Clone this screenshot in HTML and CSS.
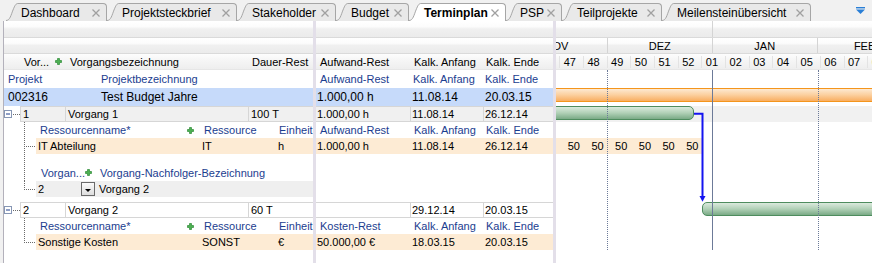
FILE: index.html
```html
<!DOCTYPE html>
<html lang="de">
<head>
<meta charset="utf-8">
<title>Terminplan</title>
<link rel="stylesheet" href="styles.css">
</head>
<body>
<div class="tabbar">
  <div class="tab tw-dashboard">
    <svg class="tab-edge" viewBox="0 0 12 18"><path class="edge-fill" d="M0 18 C4 18 5 12 7 7 C9 2 10 .5 12 .5 V18 Z"/><path class="edge-line" d="M0 17.5 C4 17.5 5 12 7 7 C9 2 10 .5 12 .5"/></svg>
    <div class="tab-body"><span class="tab-label">Dashboard</span><svg class="tab-close" viewBox="0 0 8 8"><path d="M.5 .5 L7.5 7.5 M7.5 .5 L.5 7.5"/></svg></div>
  </div>
  <div class="tab tw-steckbrief">
    <svg class="tab-edge" viewBox="0 0 12 18"><path class="edge-fill" d="M0 18 C4 18 5 12 7 7 C9 2 10 .5 12 .5 V18 Z"/><path class="edge-line" d="M0 17.5 C4 17.5 5 12 7 7 C9 2 10 .5 12 .5"/></svg>
    <div class="tab-body"><span class="tab-label">Projektsteckbrief</span><svg class="tab-close" viewBox="0 0 8 8"><path d="M.5 .5 L7.5 7.5 M7.5 .5 L.5 7.5"/></svg></div>
  </div>
  <div class="tab tw-stake">
    <svg class="tab-edge" viewBox="0 0 12 18"><path class="edge-fill" d="M0 18 C4 18 5 12 7 7 C9 2 10 .5 12 .5 V18 Z"/><path class="edge-line" d="M0 17.5 C4 17.5 5 12 7 7 C9 2 10 .5 12 .5"/></svg>
    <div class="tab-body"><span class="tab-label">Stakeholder</span><svg class="tab-close" viewBox="0 0 8 8"><path d="M.5 .5 L7.5 7.5 M7.5 .5 L.5 7.5"/></svg></div>
  </div>
  <div class="tab tw-budget">
    <svg class="tab-edge" viewBox="0 0 12 18"><path class="edge-fill" d="M0 18 C4 18 5 12 7 7 C9 2 10 .5 12 .5 V18 Z"/><path class="edge-line" d="M0 17.5 C4 17.5 5 12 7 7 C9 2 10 .5 12 .5"/></svg>
    <div class="tab-body"><span class="tab-label">Budget</span><svg class="tab-close" viewBox="0 0 8 8"><path d="M.5 .5 L7.5 7.5 M7.5 .5 L.5 7.5"/></svg></div>
  </div>
  <div class="tab tw-termin active">
    <svg class="tab-edge" viewBox="0 0 12 18"><path class="edge-fill" d="M0 18 C4 18 5 12 7 7 C9 2 10 .5 12 .5 V18 Z"/><path class="edge-line" d="M0 17.5 C4 17.5 5 12 7 7 C9 2 10 .5 12 .5"/></svg>
    <div class="tab-body"><span class="tab-label">Terminplan</span><svg class="tab-close" viewBox="0 0 8 8"><path d="M.5 .5 L7.5 7.5 M7.5 .5 L.5 7.5"/></svg></div>
  </div>
  <div class="tab tw-psp">
    <svg class="tab-edge" viewBox="0 0 12 18"><path class="edge-fill" d="M0 18 C4 18 5 12 7 7 C9 2 10 .5 12 .5 V18 Z"/><path class="edge-line" d="M0 17.5 C4 17.5 5 12 7 7 C9 2 10 .5 12 .5"/></svg>
    <div class="tab-body"><span class="tab-label">PSP</span><svg class="tab-close" viewBox="0 0 8 8"><path d="M.5 .5 L7.5 7.5 M7.5 .5 L.5 7.5"/></svg></div>
  </div>
  <div class="tab tw-teil">
    <svg class="tab-edge" viewBox="0 0 12 18"><path class="edge-fill" d="M0 18 C4 18 5 12 7 7 C9 2 10 .5 12 .5 V18 Z"/><path class="edge-line" d="M0 17.5 C4 17.5 5 12 7 7 C9 2 10 .5 12 .5"/></svg>
    <div class="tab-body"><span class="tab-label">Teilprojekte</span><svg class="tab-close" viewBox="0 0 8 8"><path d="M.5 .5 L7.5 7.5 M7.5 .5 L.5 7.5"/></svg></div>
  </div>
  <div class="tab tw-meilen">
    <svg class="tab-edge" viewBox="0 0 12 18"><path class="edge-fill" d="M0 18 C4 18 5 12 7 7 C9 2 10 .5 12 .5 V18 Z"/><path class="edge-line" d="M0 17.5 C4 17.5 5 12 7 7 C9 2 10 .5 12 .5"/></svg>
    <div class="tab-body"><span class="tab-label">Meilensteinübersicht</span><svg class="tab-close" viewBox="0 0 8 8"><path d="M.5 .5 L7.5 7.5 M7.5 .5 L.5 7.5"/></svg></div>
  </div>
  <svg class="tab-menu" viewBox="0 0 9 7"><rect x="0" y="0" width="9" height="1.4"/><path d="M0 2.6 H9 L4.5 7 Z"/></svg>
</div>

<div class="main">
  <!-- left task table -->
  <section class="panel p-left">
    <div class="band"></div>
    <div class="band band-m"></div>
    <div class="colhead">
      <div class="lc-tree"></div>
      <div class="lc-num hd">Vor...<svg class="plus" viewBox="0 0 7 7"><path d="M2.5 .5h2v2h2v2h-2v2h-2v-2h-2v-2h2z"/></svg></div>
      <div class="lc-name hd">Vorgangsbezeichnung</div>
      <div class="lc-dur hd">Dauer-Rest</div>
    </div>
    <div class="row row-proj-head">
      <div class="pc-nr lbl">Projekt</div>
      <div class="pc-name lbl">Projektbezeichnung</div>
    </div>
    <div class="row row-proj sel">
      <div class="pc-nr">002316</div>
      <div class="pc-name">Test Budget Jahre</div>
    </div>
    <div class="row row-task shade">
      <div class="lc-tree toggle"><svg class="minus" viewBox="0 0 8 8"><rect x=".5" y=".5" width="7" height="7"/><path d="M2 4 H6"/></svg></div>
      <div class="lc-num cell">1</div>
      <div class="lc-name cell">Vorgang 1</div>
      <div class="lc-dur cell">100 T</div>
    </div>
    <div class="row row-sub">
      <div class="sub-tree tl-v"></div>
      <div class="sc-name lbl">Ressourcenname*<svg class="plus" viewBox="0 0 7 7"><path d="M2.5 .5h2v2h2v2h-2v2h-2v-2h-2v-2h2z"/></svg></div>
      <div class="sc-res lbl">Ressource</div>
      <div class="sc-unit lbl">Einheit</div>
    </div>
    <div class="row row-sub">
      <div class="sub-tree tl-tee"></div>
      <div class="sub-data res">
        <div class="sc-name">IT Abteilung</div>
        <div class="sc-res">IT</div>
        <div class="sc-unit">h</div>
      </div>
    </div>
    <div class="row row-gap1"><div class="sub-tree tl-v"></div></div>
    <div class="row row-nhead">
      <div class="sub-tree tl-v"></div>
      <div class="nc-1 lbl">Vorgan...<svg class="plus" viewBox="0 0 7 7"><path d="M2.5 .5h2v2h2v2h-2v2h-2v-2h-2v-2h2z"/></svg></div>
      <div class="nc-2 lbl">Vorgang-Nachfolger-Bezeichnung</div>
    </div>
    <div class="row row-nrow">
      <div class="sub-tree tl-elbow"></div>
      <div class="sub-data succ">
        <div class="nc-1">2<svg class="dropbtn" viewBox="0 0 14 14"><defs><linearGradient id="btng" x1="0" y1="0" x2="0" y2="1"><stop offset="0" stop-color="#fbfbfb"/><stop offset="1" stop-color="#dcdcdc"/></linearGradient></defs><rect x=".5" y=".5" width="13" height="13" fill="url(#btng)" stroke="#6a6a6a"/><path d="M4 7 H10 L7 10 Z" fill="#000"/></svg></div>
        <div class="nc-2">Vorgang 2</div>
      </div>
    </div>
    <div class="row row-gap2"></div>
    <div class="row row-task">
      <div class="lc-tree toggle"><svg class="minus" viewBox="0 0 8 8"><rect x=".5" y=".5" width="7" height="7"/><path d="M2 4 H6"/></svg></div>
      <div class="lc-num cell">2</div>
      <div class="lc-name cell">Vorgang 2</div>
      <div class="lc-dur cell">60 T</div>
    </div>
    <div class="row row-sub">
      <div class="sub-tree tl-v"></div>
      <div class="sc-name lbl">Ressourcenname*<svg class="plus" viewBox="0 0 7 7"><path d="M2.5 .5h2v2h2v2h-2v2h-2v-2h-2v-2h2z"/></svg></div>
      <div class="sc-res lbl">Ressource</div>
      <div class="sc-unit lbl">Einheit</div>
    </div>
    <div class="row row-sub">
      <div class="sub-tree tl-elbow"></div>
      <div class="sub-data res">
        <div class="sc-name">Sonstige Kosten</div>
        <div class="sc-res">SONST</div>
        <div class="sc-unit">€</div>
      </div>
    </div>
  </section>

  <div class="sep"></div>

  <!-- middle values table -->
  <section class="panel p-mid">
    <div class="band"></div>
    <div class="band band-m"></div>
    <div class="colhead">
      <div class="mc1 hd">Aufwand-Rest</div>
      <div class="mc2 hd">Kalk. Anfang</div>
      <div class="mc3 hd">Kalk. Ende</div>
    </div>
    <div class="row row-proj-head">
      <div class="mc1 lbl">Aufwand-Rest</div>
      <div class="mc2 lbl lbl-s">Kalk. Anfang</div>
      <div class="mc3 lbl lbl-s">Kalk. Ende</div>
    </div>
    <div class="row row-proj sel">
      <div class="mc1 val">1.000,00 h</div>
      <div class="mc2 val">11.08.14</div>
      <div class="mc3 val">20.03.15</div>
    </div>
    <div class="row row-task shade">
      <div class="mc1 cell">1.000,00 h</div>
      <div class="mc2 cell">11.08.14</div>
      <div class="mc3 cell">26.12.14</div>
    </div>
    <div class="row row-sub">
      <div class="mc1 lbl">Aufwand-Rest</div>
      <div class="mc2 lbl">Kalk. Anfang</div>
      <div class="mc3 lbl">Kalk. Ende</div>
    </div>
    <div class="row row-sub res">
      <div class="mc1 val">1.000,00 h</div>
      <div class="mc2 val">11.08.14</div>
      <div class="mc3 val">26.12.14</div>
    </div>
    <div class="row row-gap1"></div>
    <div class="row row-nhead"></div>
    <div class="row row-nrow"></div>
    <div class="row row-gap2"></div>
    <div class="row row-task">
      <div class="mc1 cell"></div>
      <div class="mc2 cell">29.12.14</div>
      <div class="mc3 cell">20.03.15</div>
    </div>
    <div class="row row-sub">
      <div class="mc1 lbl">Kosten-Rest</div>
      <div class="mc2 lbl">Kalk. Anfang</div>
      <div class="mc3 lbl">Kalk. Ende</div>
    </div>
    <div class="row row-sub res">
      <div class="mc1 val">50.000,00 €</div>
      <div class="mc2 val">18.03.15</div>
      <div class="mc3 val">20.03.15</div>
    </div>
  </section>

  <div class="sep"></div>

  <!-- gantt -->
  <section class="panel p-gantt">
    <div class="band"><div class="yr-2014"></div></div>
    <div class="band band-m">
      <div class="months">
        <div class="mon m-nov">NOV</div>
        <div class="mon m-dez">DEZ</div>
        <div class="mon m-jan">JAN</div>
        <div class="mon m-feb">FEB</div>
      </div>
    </div>
    <div class="colhead">
      <div class="weeks">
        <span class="wk">46</span><span class="wk">47</span><span class="wk">48</span><span class="wk">49</span><span class="wk">50</span><span class="wk">51</span><span class="wk">52</span><span class="wk">01</span><span class="wk">02</span><span class="wk">03</span><span class="wk">04</span><span class="wk">05</span><span class="wk">06</span><span class="wk">07</span><span class="wk">08</span>
      </div>
    </div>
    <div class="row row-proj-head"></div>
    <div class="row row-proj"></div>
    <div class="row row-task g-shade"></div>
    <div class="row row-sub"></div>
    <div class="row row-sub">
      <div class="load"><span>50</span><span>50</span><span>50</span><span>50</span><span>50</span><span>50</span></div>
    </div>

    <div class="bar bar-proj"></div>
    <div class="bar bar-task1"></div>
    <div class="bar bar-task2"></div>
    <svg class="link" viewBox="0 0 16 95"><path d="M2 4.7 H10.5 V88" fill="none" stroke="#1414f0" stroke-width="2"/><path d="M7.5 87 H13.5 L10.5 92.7 Z" fill="#1414f0"/></svg>
    <div class="gl gl-dot gl-dec"></div>
    <div class="gl gl-solid gl-jan"></div>
    <div class="gl gl-dot gl-feb"></div>
  </section>
</div>
</body>
</html>
```

FILE: styles.css
```css
* { box-sizing: border-box; }
html, body { margin: 0; padding: 0; }
body {
  width: 872px;
  height: 263px;
  overflow: hidden;
  background: #f1f1f1;
  font-family: "Liberation Sans", Arial, sans-serif;
  font-size: 11px;
  color: #000;
}

/* ---------- tab strip ---------- */
.tabbar {
  display: flex;
  align-items: flex-end;
  height: 21px;
  padding-left: 6px;
}
.tab { display: flex; flex: none; height: 18px; }
.tab-edge { display: block; flex: none; width: 12px; height: 18px; }
.edge-fill { fill: #e9e9e9; }
.edge-line { fill: none; stroke: #a6a6a6; stroke-width: 1; }
.tab-body {
  flex: 1;
  display: flex;
  align-items: center;
  background: #e9e9e9;
  border-top: 1px solid #a6a6a6;
  border-right: 1px solid #a6a6a6;
  border-top-right-radius: 4px;
  padding: 0 6px 0 3px;
  font-size: 12px;
  white-space: nowrap;
}
.tab-close {
  flex: none;
  margin-left: auto;
  width: 8px;
  height: 8px;
  fill: none;
  stroke: #a0a0a0;
  stroke-width: 1.3;
}
.tab.active .edge-fill { fill: #fff; }
.tab.active .tab-body { background: #fff; }
.tab.active .tab-label { font-weight: bold; }

.tw-dashboard { width: 101px; }
.tw-steckbrief { width: 130px; }
.tw-stake { width: 99px; }
.tw-budget { width: 73px; }
.tw-termin { width: 97px; }
.tw-psp { width: 56px; }
.tw-teil { width: 100px; }
.tw-meilen { width: 149px; }
.tw-psp .tab-body { padding-left: 2px; }

.tab-menu {
  align-self: flex-start;
  margin: 7px 7px 0 auto;
  width: 9px;
  height: 7px;
  fill: #2a7fd6;
}

/* ---------- main grid ---------- */
.main {
  display: flex;
  height: 242px;
  margin-left: 3px;
  border-left: 1px solid #b3b1bb;
  background: #fff;
}
.panel {
  flex: none;
  display: flex;
  flex-direction: column;
  overflow: hidden;
}
.p-left { width: 309px; }
.p-mid { width: 237px; }
.p-gantt { flex: 1; position: relative; }
.sep { flex: none; width: 3px; background: #e3dfe9; }

.band {
  flex: none;
  display: flex;
  height: 17px;
  border-bottom: 1px solid #dadada;
  background: linear-gradient(#ffffff 0%, #fcfcfc 35%, #f0f0f0 50%, #ebebeb 100%);
}
.band-m { height: 16px; }
.colhead {
  flex: none;
  display: flex;
  align-items: stretch;
  height: 16px;
  border-bottom: 1px solid #e6e6e6;
  background: linear-gradient(#fdfdfd 0%, #f6f6f6 40%, #eeeeee 100%);
}
.colhead > div { display: flex; align-items: center; white-space: nowrap; }

.row { flex: none; display: flex; align-items: stretch; }
.row > div { display: flex; align-items: center; white-space: nowrap; }
.row-proj-head { height: 18px; }
.row-proj { height: 18px; font-size: 12px; }
.row-task { height: 16px; }
.row-sub { height: 16px; }
.row-gap1 { height: 10px; }
.row-nhead { height: 17px; }
.row-nrow { height: 16px; }
.row-gap2 { height: 5px; }

.sel { background: #c6dafa; }
.res { background: #fdebd4; }
.lbl { color: #1b3d8f; }

/* left columns */
.lc-tree { width: 16px; flex: none; }
.lc-num { width: 45px; flex: none; }
.lc-name { width: 183px; flex: none; }
.lc-dur { flex: 1; }
.colhead .lc-num { padding-left: 4px; }
.colhead .lc-name { padding-left: 5px; }
.colhead .lc-dur { padding-left: 4px; }

.pc-nr { width: 93px; flex: none; padding-left: 4px; }
.pc-name { flex: 1; padding-left: 4px; }

.cell {
  border-top: 1px solid #d6d6d6;
  border-bottom: 1px solid #d6d6d6;
  border-left: 1px solid #d6d6d6;
  padding-left: 2px;
}
.shade .cell { background: #f0f0f0; }

.plus {
  flex: none;
  width: 7px;
  height: 7px;
  margin-left: auto;
  fill: #4cb152;
  stroke: #2c8a35;
  stroke-width: .7;
}
.colhead .lc-num .plus { margin-right: 3px; }
.sc-name .plus { margin-right: 6px; }
.nc-1 .plus { margin-right: 5px; }

.toggle {
  background: repeating-linear-gradient(90deg, #6a6a6a 0 1px, transparent 1px 2px) 9px 8px / 7px 1px no-repeat;
}
.minus { width: 8px; height: 8px; flex: none; }
.minus rect { fill: #fff; stroke: #8696b4; }
.minus path { stroke: #1c3d8c; stroke-width: 1; }

/* tree connectors */
.sub-tree { width: 32px; flex: none; }
.tl-v {
  background: repeating-linear-gradient(#6a6a6a 0 1px, transparent 1px 2px) 20px 0 / 1px 100% no-repeat;
}
.tl-tee {
  background:
    repeating-linear-gradient(#6a6a6a 0 1px, transparent 1px 2px) 20px 0 / 1px 100% no-repeat,
    repeating-linear-gradient(90deg, #6a6a6a 0 1px, transparent 1px 2px) 22px 8px / 10px 1px no-repeat;
}
.tl-elbow {
  background:
    repeating-linear-gradient(#6a6a6a 0 1px, transparent 1px 2px) 20px 0 / 1px 9px no-repeat,
    repeating-linear-gradient(90deg, #6a6a6a 0 1px, transparent 1px 2px) 22px 8px / 10px 1px no-repeat;
}

.sub-data { flex: 1; display: flex; align-items: stretch; }
.sub-data > div { display: flex; align-items: center; white-space: nowrap; }
.succ { background: #efefef; }

.sc-name { width: 164px; flex: none; padding-left: 4px; }
.sc-res { width: 76px; flex: none; padding-left: 4px; }
.sc-unit { flex: 1; padding-left: 3px; }
.sub-data .sc-name,
.sub-data .sc-res,
.sub-data .sc-unit { padding-left: 2px; }

.nc-1 { width: 60px; flex: none; padding-left: 5px; }
.nc-2 { flex: 1; padding-left: 4px; }
.sub-data .nc-1 { padding-left: 2px; }
.sub-data .nc-2 { padding-left: 3px; }
.dropbtn { flex: none; width: 14px; height: 14px; margin-left: auto; margin-right: 1px; }

/* middle columns */
.mc1 { width: 94px; flex: none; padding-left: 4px; }
.mc2 { width: 73px; flex: none; padding-left: 4px; }
.mc3 { flex: 1; padding-left: 3px; }
.mc2.lbl-s { padding-left: 3px; }
.mc3.lbl-s { padding-left: 2px; }
.val { padding-left: 2px; }
.mc1.val { padding-left: 1px; }
.mc1.cell { border-left: none; padding-left: 1px; }
.mc2.cell, .mc3.cell { padding-left: 1px; }

/* ---------- gantt ---------- */
.yr-2014 { flex: none; width: 156.7px; border-right: 1px solid #d4d4d4; }
.months { flex: none; display: flex; margin-left: -49.9px; }
.mon {
  flex: none;
  display: flex;
  align-items: center;
  justify-content: center;
  border-right: 1px solid #d4d4d4;
}
.m-nov { width: 101.6px; }
.m-dez { width: 105px; }
.m-jan { width: 105px; }
.m-feb { width: 94.8px; }

.weeks { flex: none; display: flex; align-items: stretch; margin-left: -19.4px; }
.wk {
  flex: none;
  width: 23.7px;
  display: flex;
  align-items: center;
  justify-content: flex-end;
  padding-right: 7px;
  border-right: 1px solid #e3e3e3;
}

.g-shade { background: #f1f1f1; }

.row > .load {
  display: flex;
  align-items: center;
  width: 146.3px;
  padding-left: 4.3px;
  background: #fdebd4;
}
.load span {
  flex: none;
  width: 23.7px;
  text-align: right;
  padding-right: 4px;
}

.bar { position: absolute; height: 14px; }
.bar-proj {
  top: 67px;
  left: -4px;
  right: -4px;
  border: 1px solid #f4951c;
  background: linear-gradient(#fde9d2 0%, #fbcf9e 50%, #f8ae61 100%);
}
.bar-task1 {
  top: 85px;
  left: -6px;
  width: 144.3px;
  border: 1px solid #4e8c5e;
  border-radius: 0 5px 5px 0;
  background: linear-gradient(#dbeadd 0%, #b0d0b6 50%, #7aaa86 100%);
}
.bar-task2 {
  top: 181px;
  left: 146.3px;
  right: -6px;
  border: 1px solid #4e8c5e;
  border-radius: 5px 0 0 5px;
  background: linear-gradient(#dbeadd 0%, #b0d0b6 50%, #7aaa86 100%);
}
.link {
  position: absolute;
  left: 136px;
  top: 88px;
  width: 16px;
  height: 95px;
}

.gl { position: absolute; top: 49px; height: 180px; width: 1px; }
.gl-dot { border-left: 1px dotted #6c7a98; }
.gl-solid { background: #6c7a98; }
.gl-dec { left: 51px; }
.gl-jan { left: 156px; }
.gl-feb { left: 262px; }
```
